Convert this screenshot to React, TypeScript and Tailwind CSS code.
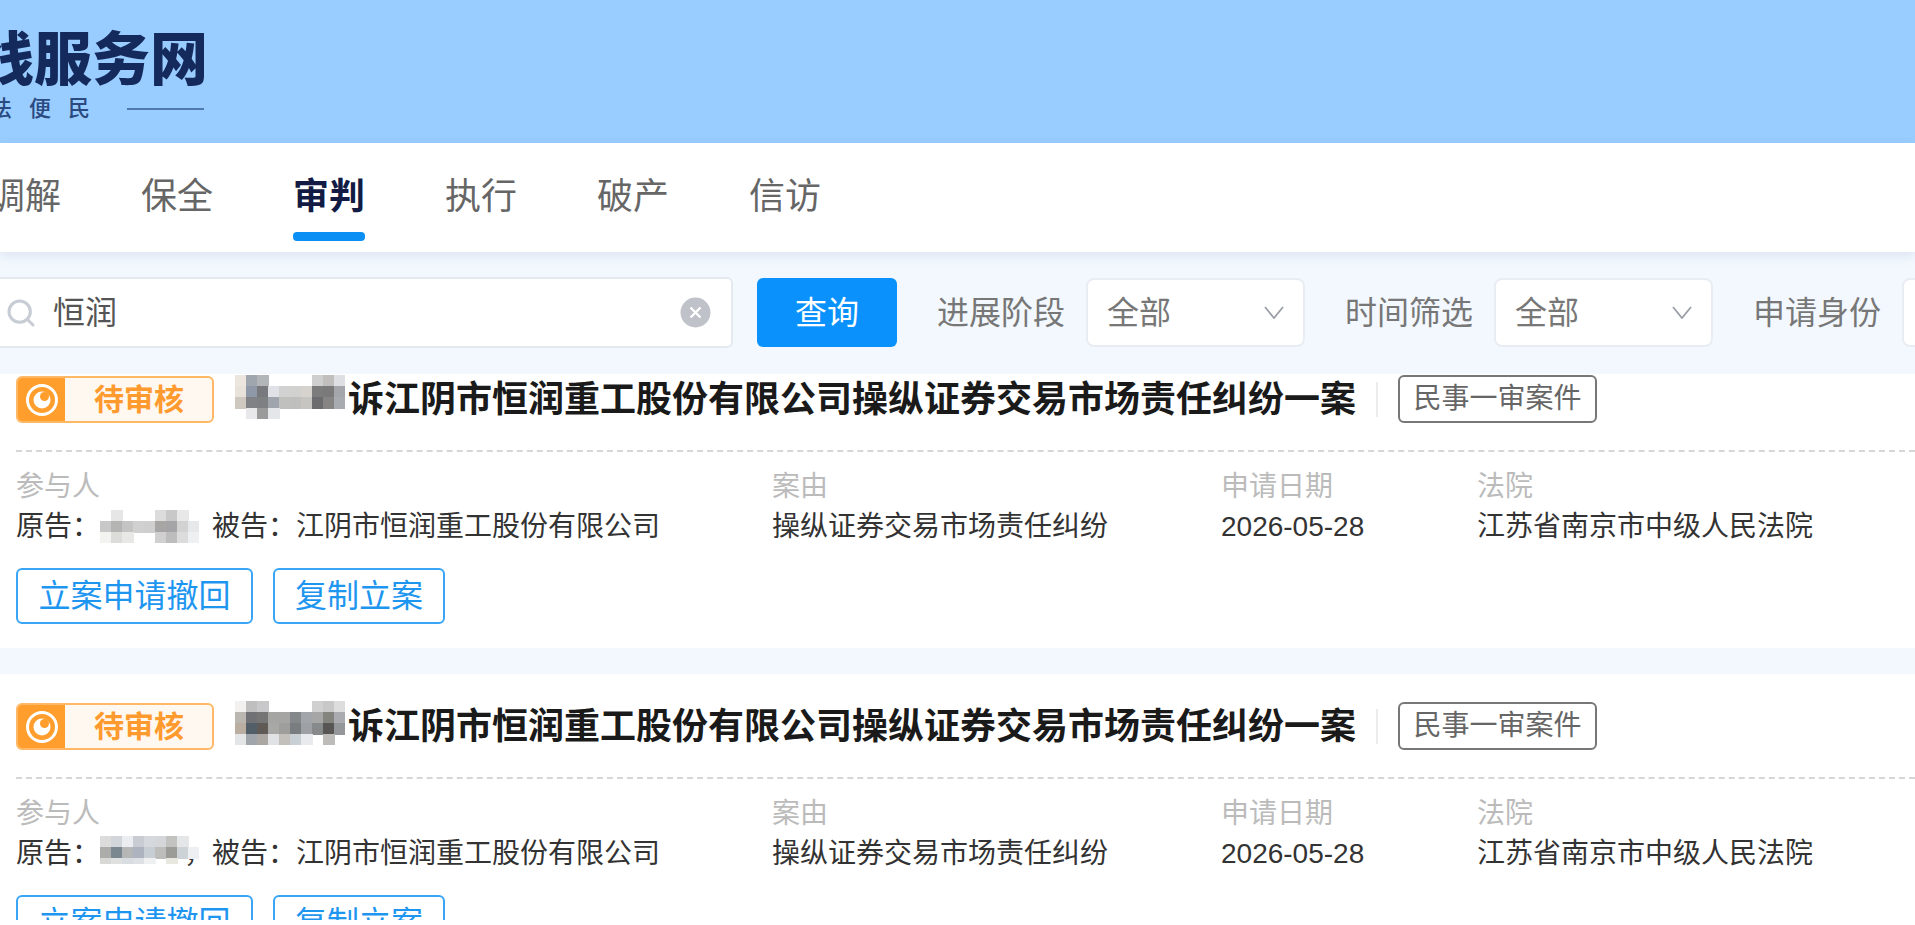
import React from "react";
import { Search } from "lucide-react";

type Cell = string | null;

const title1: Cell[][] = [
  ["#ece6df", "#9fa6ae", "#b3b6b8", null, null, null, null, "#cfcfcf", "#c0bfbe", "#dedfe2"],
  ["#e8e2da", "#8e98a6", "#77797c", "#dfe1e6", "#d2d2d2", "#d1d1cf", "#d6d3cf", "#7d7c7c", "#7a7a7a", "#a3a6ab"],
  ["#cfc8be", "#808285", "#7f8081", "#a0a5ad", "#c0c0bf", "#bfbfbd", "#c7c5c2", "#6c6b6e", "#868584", "#a8abaf"],
  [null, "#e8e8ea", "#9a9a9a", "#e4e6ea", null, null, null, null, null, null],
];
const title2: Cell[][] = [
  ["#f3f1f0", "#bfbfc0", "#c8c8ca", null, null, null, null, "#d0d0d0", "#c8c8c8", "#dddddd"],
  ["#b9b7b0", "#6f7175", "#757575", "#a5a5a3", "#a5a5a3", "#85888a", "#a2a5a9", "#a6a6a6", "#84847f", "#a9abb0"],
  ["#baaea0", "#525e68", "#5f5a56", "#a8a8a6", "#9e9e9c", "#7a7d7f", "#9da0a4", "#878a8b", "#575654", "#93979a"],
  ["#e4e5e6", "#9fa5aa", "#aba8a3", "#e0e2e6", "#c3c0bc", "#c8d0d6", "#e8eaee", null, "#bebcb8", null],
];
const name1: Cell[][] = [
  [null, "#e6e6e6", null, null, null, "#dcdcdc", "#c8c8c8", "#e8e8e8", null],
  ["#c8c8c8", "#b4b4b2", "#c4c4c4", "#d0d0d0", "#cfcfcf", "#a8a6a5", "#a5a4a6", "#d2d2d2", "#e6e8ea"],
  ["#f3f3f0", "#dcdcd9", "#e8e8e6", null, null, "#d0d0d0", "#bdbdbd", "#dcdcdc", "#eef0f2"],
];
const name2: Cell[][] = [
  ["#dcdcdc", "#d2d5da", "#ecedf0", "#c9ccd2", "#d5d8dc", "#d5d6da", "#c2c2c0", "#e4e6e8", null],
  ["#acacaa", "#7a8690", "#b5b7b6", "#aeb4bf", "#c8cfd4", "#bdbdbc", "#9b9c97", "#cdd2d6", "#eeeff2"],
  ["#d8d8d6", "#dfe0e0", "#d9dde2", "#dde0e4", "#eef0f2", null, "#e8e8e0", null, null],
];

function Mosaic({ rows, className, rowHeight = 11, lastRow }: { rows: Cell[][]; className?: string; rowHeight?: number; lastRow?: number }) {
  const w = rows[0].length * 11;
  const h = (rows.length - 1) * rowHeight + (lastRow ?? rowHeight);
  return (
    <svg width={w} height={h} viewBox={`0 0 ${w} ${h}`} className={className} shapeRendering="crispEdges">
      {rows.map((row, y) =>
        row.map((c, x) =>
          c ? <rect key={`${x}-${y}`} x={x * 11} y={y * rowHeight} width={11.5} height={y === rows.length - 1 ? (lastRow ?? rowHeight) : rowHeight + 0.5} fill={c} /> : null
        )
      )}
    </svg>
  );
}

function Chevron() {
  return (
    <svg width="20" height="13" viewBox="0 0 20 13" fill="none" stroke="#9a9ea6" strokeWidth="1.8">
      <polyline points="1,1 10,12 19,1" />
    </svg>
  );
}

function Select() {
  return (
    <div className="ml-[21px] flex h-[69px] w-[219px] shrink-0 items-center justify-between rounded-lg border-2 border-[#e9edf3] bg-white pl-[19px] pr-[19px] text-[32px] text-[#777777]">
      <span>全部</span>
      <Chevron />
    </div>
  );
}

function Filter({ label }: { label: string }) {
  return (
    <>
      <span className="ml-[40px] w-[128px] shrink-0 whitespace-nowrap text-[32px] text-[#777777]">{label}</span>
      <Select />
    </>
  );
}

function StatusIcon() {
  return (
    <svg width="34" height="34" viewBox="0 0 34 34" fill="none">
      <circle cx="17" cy="17" r="14.5" stroke="#fff" strokeWidth="3" />
      <circle cx="17" cy="17" r="8.5" fill="#fff" />
      <circle cx="19.5" cy="13.5" r="4.5" fill="#ff9e2c" />
    </svg>
  );
}

function Case({ titleRows, titleClass, nameRows, nameLast, comma, nameClass }: { titleRows: Cell[][]; titleClass: string; nameRows: Cell[][]; nameLast?: number; comma?: boolean; nameClass: string }) {
  return (
    <section className="mb-[26px] h-[301px] bg-white pl-4 pt-[29px]">
      <div className="flex h-[47px] items-center whitespace-nowrap">
        <div className="flex h-[47px] w-[198px] shrink-0 overflow-hidden rounded-md border-2 border-[#ffb866] bg-[#fff8f0]">
          <div className="flex w-[47px] shrink-0 items-center justify-center bg-[#ff9e2c]">
            <StatusIcon />
          </div>
          <div className="flex-1 pl-[1px] text-center text-[30px] font-semibold leading-[43px] text-[#ff9a2e]">待审核</div>
        </div>
        <div className="ml-[21px] w-[113px] shrink-0 self-start">
          <Mosaic rows={titleRows} className={titleClass} />
        </div>
        <h2 className="text-[36px] font-bold leading-[47px] text-[#1a1a1a]">诉江阴市恒润重工股份有限公司操纵证券交易市场责任纠纷一案</h2>
        <div className="ml-5 h-[35px] w-[2px] bg-[#ececec]" />
        <div className="ml-5 -mt-[2px] flex h-[48px] w-[199px] items-center justify-center rounded-md border-2 border-[#777777] text-[28px] text-[#666666]">民事一审案件</div>
      </div>
      <div className="mt-[27px] h-[2px] border-t-2 border-dashed border-[#d6d6d6]" />
      <div className="mt-[15px] grid grid-cols-[756px_449px_256px_1fr] text-[28px] leading-[40px] text-[#333333]">
        <div className="text-[#bbbbbb]">参与人</div>
        <div className="text-[#bbbbbb]">案由</div>
        <div className="text-[#bbbbbb]">申请日期</div>
        <div className="text-[#bbbbbb]">法院</div>
        <div className="flex">
          <span>原告：</span>
          <span className="relative h-[40px] w-[112px] shrink-0">
            {comma ? <span className="absolute left-[84px] top-0">，</span> : null}
            <Mosaic rows={nameRows} lastRow={nameLast} className={nameClass} />
          </span>
          <span>被告：江阴市恒润重工股份有限公司</span>
        </div>
        <div>操纵证券交易市场责任纠纷</div>
        <div>2026-05-28</div>
        <div>江苏省南京市中级人民法院</div>
      </div>
      <div className="mt-[21px] flex gap-5 text-[32px] text-[#1e96f0]">
        <button className="flex h-[56px] w-[237px] items-center justify-center rounded-md border-2 border-[#3aa4f5]">立案申请撤回</button>
        <button className="flex h-[56px] w-[172px] items-center justify-center rounded-md border-2 border-[#3aa4f5]">复制立案</button>
      </div>
    </section>
  );
}

export default function App() {
  return (
    <div className="h-[925px] w-full overflow-hidden bg-white font-['Liberation_Sans','Noto_Sans_CJK_SC',sans-serif]">
      <header className="h-[143px] bg-[#99ccff]">
        <div className="w-[208px] overflow-hidden pt-[31px]">
          <div className="flex justify-end whitespace-nowrap text-[58px] font-black leading-[58px] text-[#14295c]">线服务网</div>
          <div className="mt-[9px] flex h-[22px] items-center justify-end whitespace-nowrap text-[22px] font-medium leading-[22px] tracking-[17px] text-[#2a4a80]">
            <span>司法便民</span>
            <span className="ml-[20px] mr-[4px] h-[2px] w-[77px] shrink-0 bg-[#4f7ab0]" />
          </div>
        </div>
      </header>

      <nav className="relative z-10 flex h-[109px] gap-[80px] overflow-visible bg-white pt-[34px] text-[36px] leading-[40px] text-[#666666] shadow-[0_4px_10px_rgba(110,130,175,0.16)]">
        <div className="-ml-[11px] w-[72px] whitespace-nowrap">调解</div>
        <div className="w-[72px] whitespace-nowrap">保全</div>
        <div className="w-[72px] whitespace-nowrap font-bold text-[#111b44]">
          审判
          <div className="mt-[15px] h-[9px] rounded-[4px] bg-[#0a8ff5]" />
        </div>
        <div className="w-[72px] whitespace-nowrap">执行</div>
        <div className="w-[72px] whitespace-nowrap">破产</div>
        <div className="w-[72px] whitespace-nowrap">信访</div>
      </nav>

      <div className="flex h-[122px] items-center bg-[#f3f8fe] pb-[1px] whitespace-nowrap">
        <div className="-ml-[40px] flex h-[71px] w-[773px] shrink-0 items-center rounded-md border-2 border-[#e4e8ef] bg-white pl-[45px] pr-[20px] text-[32px] text-[#555555]">
          <Search size={32} strokeWidth={2.3} className="-ml-[2px] shrink-0 text-[#c8ccd4]" />
          <span className="ml-[16px] flex-1">恒润</span>
          <svg width="31" height="31" viewBox="0 0 31 31" className="shrink-0">
            <circle cx="15.5" cy="15.5" r="15" fill="#bfc2c9" />
            <path d="M10.5 10.5 20.5 20.5M20.5 10.5 10.5 20.5" stroke="#fff" strokeWidth="2.4" />
          </svg>
        </div>
        <button className="ml-[24px] h-[69px] w-[140px] shrink-0 rounded-md bg-[#0a91fb] text-[32px] text-white">查询</button>
        <span className="ml-[40px] w-[128px] shrink-0 whitespace-nowrap text-[32px] text-[#777777]">进展阶段</span>
        <Select />
        <Filter label="时间筛选" />
        <Filter label="申请身份" />
      </div>

      <main className="h-[546px] overflow-hidden bg-[#f3f8fe]">
        <div className="-mt-[27px]">
          <Case titleRows={title1} titleClass="-mt-[1px]" nameRows={name1} nameClass="absolute left-0 top-[3px]" />
          <Case titleRows={title2} titleClass="-mt-[2px]" nameRows={name2} nameLast={6} comma nameClass="absolute left-0 top-[2px]" />
        </div>
      </main>
    </div>
  );
}
